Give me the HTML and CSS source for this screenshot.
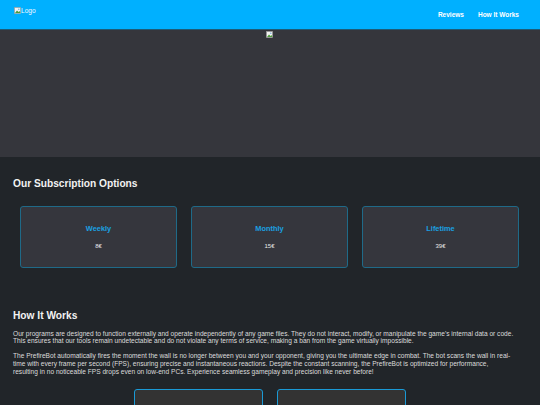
FILE: index.html
```html
<!DOCTYPE html>
<html lang="en">
<head>
<meta charset="utf-8">
<title>PrefireBot</title>
<link rel="stylesheet" href="styles.css">
</head>
<body>
<header class="topbar">
  <div class="logo">
    <svg class="broken" viewBox="0 0 7 7" width="7" height="7" aria-hidden="true">
      <rect x="0.5" y="0.5" width="6" height="6" fill="#f2f2f2" stroke="#9a9a9a" stroke-width="0.6"/>
      <path d="M1 6 L3 3.5 L4.5 5 L5.5 4 L6.5 6 Z" fill="#4d9a3a"/>
      <circle cx="4.8" cy="2.2" r="0.7" fill="#6aa8d8"/>
    </svg><span class="logo-alt">Logo</span>
  </div>
  <nav class="nav">
    <a class="nav-link" href="#reviews">Reviews</a>
    <a class="nav-link" href="#how">How It Works</a>
  </nav>
</header>

<section class="hero">
  <svg class="broken" viewBox="0 0 7 7" width="7" height="7" aria-hidden="true">
    <rect x="0.5" y="0.5" width="6" height="6" fill="#f2f2f2" stroke="#9a9a9a" stroke-width="0.6"/>
    <path d="M1 6 L3 3.5 L4.5 5 L5.5 4 L6.5 6 Z" fill="#4d9a3a"/>
    <circle cx="4.8" cy="2.2" r="0.7" fill="#6aa8d8"/>
  </svg>
</section>

<main class="content">
  <section class="subs">
    <h2 class="section-title">Our Subscription Options</h2>
    <div class="plans">
      <div class="plan">
        <h3 class="plan-name">Weekly</h3>
        <p class="plan-price">8€</p>
      </div>
      <div class="plan">
        <h3 class="plan-name">Monthly</h3>
        <p class="plan-price">15€</p>
      </div>
      <div class="plan">
        <h3 class="plan-name">Lifetime</h3>
        <p class="plan-price">39€</p>
      </div>
    </div>
  </section>

  <section class="how" id="how">
    <h2 class="section-title how-title">How It Works</h2>
    <p class="text">Our programs are designed to function externally and operate independently of any game files. They do not interact, modify, or manipulate the game's internal data or code. This ensures that our tools remain undetectable and do not violate any terms of service, making a ban from the game virtually impossible.</p>
    <p class="text text-narrow">The PrefireBot automatically fires the moment the wall is no longer between you and your opponent, giving you the ultimate edge in combat. The bot scans the wall in real-time with every frame per second (FPS), ensuring precise and instantaneous reactions. Despite the constant scanning, the PrefireBot is optimized for performance, resulting in no noticeable FPS drops even on low-end PCs. Experience seamless gameplay and precision like never before!</p>
    <div class="media">
      <div class="media-box"></div>
      <div class="media-box"></div>
    </div>
  </section>
</main>
</body>
</html>
```
FILE: styles.css
```css
* { box-sizing: border-box; }
html, body { margin: 0; padding: 0; }
body {
  background: #212529;
  color: #e6e6e6;
  font-family: "Liberation Sans", Arial, sans-serif;
  overflow: hidden;
  height: 405px;
}
.topbar {
  height: 30px;
  background: #00b0ff;
  border-bottom: 1px solid #1d5c78;
  display: flex;
  align-items: center;
  justify-content: space-between;
  padding: 0 21px 0 14px;
}
.logo {
  display: flex;
  align-items: flex-start;
  margin-top: -8px;
  color: #f4f8ff;
  font-size: 6.6px;
  line-height: 7px;
}
.broken { display: block; }
.nav { display: flex; gap: 14px; }
.nav-link {
  color: #ffffff;
  text-decoration: none;
  font-weight: bold;
  font-size: 6.5px;
}
.hero {
  height: 127px;
  background: #35363c;
  display: flex;
  justify-content: center;
  padding-top: 1px;
}
.hero .broken { margin-left: -2px; }
.content { padding: 0 13px; }
.section-title {
  margin: 0;
  font-size: 10.2px;
  line-height: 13px;
  font-weight: bold;
  color: #f2f2f2;
}
.subs { padding-top: 20px; }
.plans {
  display: flex;
  gap: 14px;
  margin: 16px 8px 0 7px;
}
.plan {
  flex: 1;
  height: 62px;
  background: #35363d;
  border: 1px solid #1f6a88;
  border-radius: 3px;
  padding: 17px 0;
  text-align: center;
}
.plan-name {
  margin: 0;
  font-size: 7.4px;
  line-height: 9px;
  font-weight: bold;
  color: #1aa0e2;
}
.plan-price {
  margin: 8.5px 0 0;
  font-size: 6px;
  line-height: 8px;
  color: #e8e8e8;
}
.how { padding-top: 41px; }
.how-title { margin-bottom: 7.5px; }
.text {
  margin: 0 0 6.4px;
  font-size: 6.6px;
  line-height: 7.9px;
  color: #dcdcdc;
  max-width: 504px;
}
.text-narrow { max-width: 500px; }
.media {
  display: flex;
  justify-content: center;
  gap: 14px;
  margin-top: 14px;
}
.media-box {
  width: 129px;
  height: 60px;
  background: #333333;
  border: 1px solid #1a9ad6;
  border-radius: 3px;
}
```
